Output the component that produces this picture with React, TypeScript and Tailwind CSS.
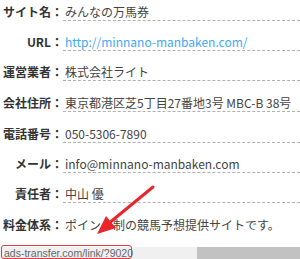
import React from 'react';

const rows = [
  { label: 'サイト名', value: 'みんなの万馬券', mt: 'mt-[4px]' },
  { label: 'URL', value: 'http://minnano-manbaken.com/', mt: 'mt-[13px]', link: true },
  { label: '運営業者', value: '株式会社ライト', mt: 'mt-[13px]' },
  { label: '会社住所', value: '東京都港区芝5丁目27番地3号 MBC-B 38号', mt: 'mt-[14px]' },
  { label: '電話番号', value: '050-5306-7890', mt: 'mt-[14px]' },
  { label: 'メール', value: 'info@minnano-manbaken.com', mt: 'mt-[13px]' },
  { label: '責任者', value: '中山 優', mt: 'mt-[13px]' },
  { label: '料金体系', value: 'ポイント制の競馬予想提供サイトです。', mt: 'mt-[14px]', last: true },
];

export default function App() {
  return (
    <div
      className="relative flex h-[259px] w-[300px] flex-col overflow-hidden bg-white"
      style={{ fontFamily: '"Noto Sans CJK JP", "Noto Sans", sans-serif' }}
    >
      {/* Info table */}
      <div className="flex flex-col">
        {rows.map((row) => (
          <div key={row.label} className={`flex text-[12px] leading-[16px] ${row.mt}`}>
            <div className="w-[63px] shrink-0 whitespace-nowrap text-right font-bold text-[#333]">
              {row.label}：
            </div>
            <div
              className={
                row.last
                  ? 'flex-1 whitespace-nowrap pl-[2px] text-[#444]'
                  : 'flex-1 whitespace-nowrap border-b border-dashed border-[#b0b0b0] pl-[2px] text-[#444]'
              }
            >
              {row.link ? <span className="text-[#3fa9f5]">{row.value}</span> : row.value}
            </div>
          </div>
        ))}
      </div>

      {/* Status bar */}
      <div className="mt-auto flex h-[12px]">
        <div className="w-[197px] bg-[#f0f0f0] pl-[4px] font-['Liberation_Sans',sans-serif] text-[10.5px] leading-[12px] whitespace-nowrap text-[#666]">
          ads-transfer.com/link/?9020
        </div>
        <div className="flex-1 bg-[#c2c2c2]"></div>
      </div>

      {/* Annotation */}
      <div className="absolute left-[1px] top-[245px] h-[14px] w-[131px] rounded-[3px] border-[1.5px] border-[#e8383d]"></div>
      <svg className="absolute left-0 top-0" width="300" height="259" viewBox="0 0 300 259">
        <line x1="153" y1="187" x2="108" y2="224" stroke="#e8262b" strokeWidth="3" strokeLinecap="round" />
        <polygon points="97,234 106,216 116,228" fill="#e8262b" />
      </svg>
    </div>
  );
}
